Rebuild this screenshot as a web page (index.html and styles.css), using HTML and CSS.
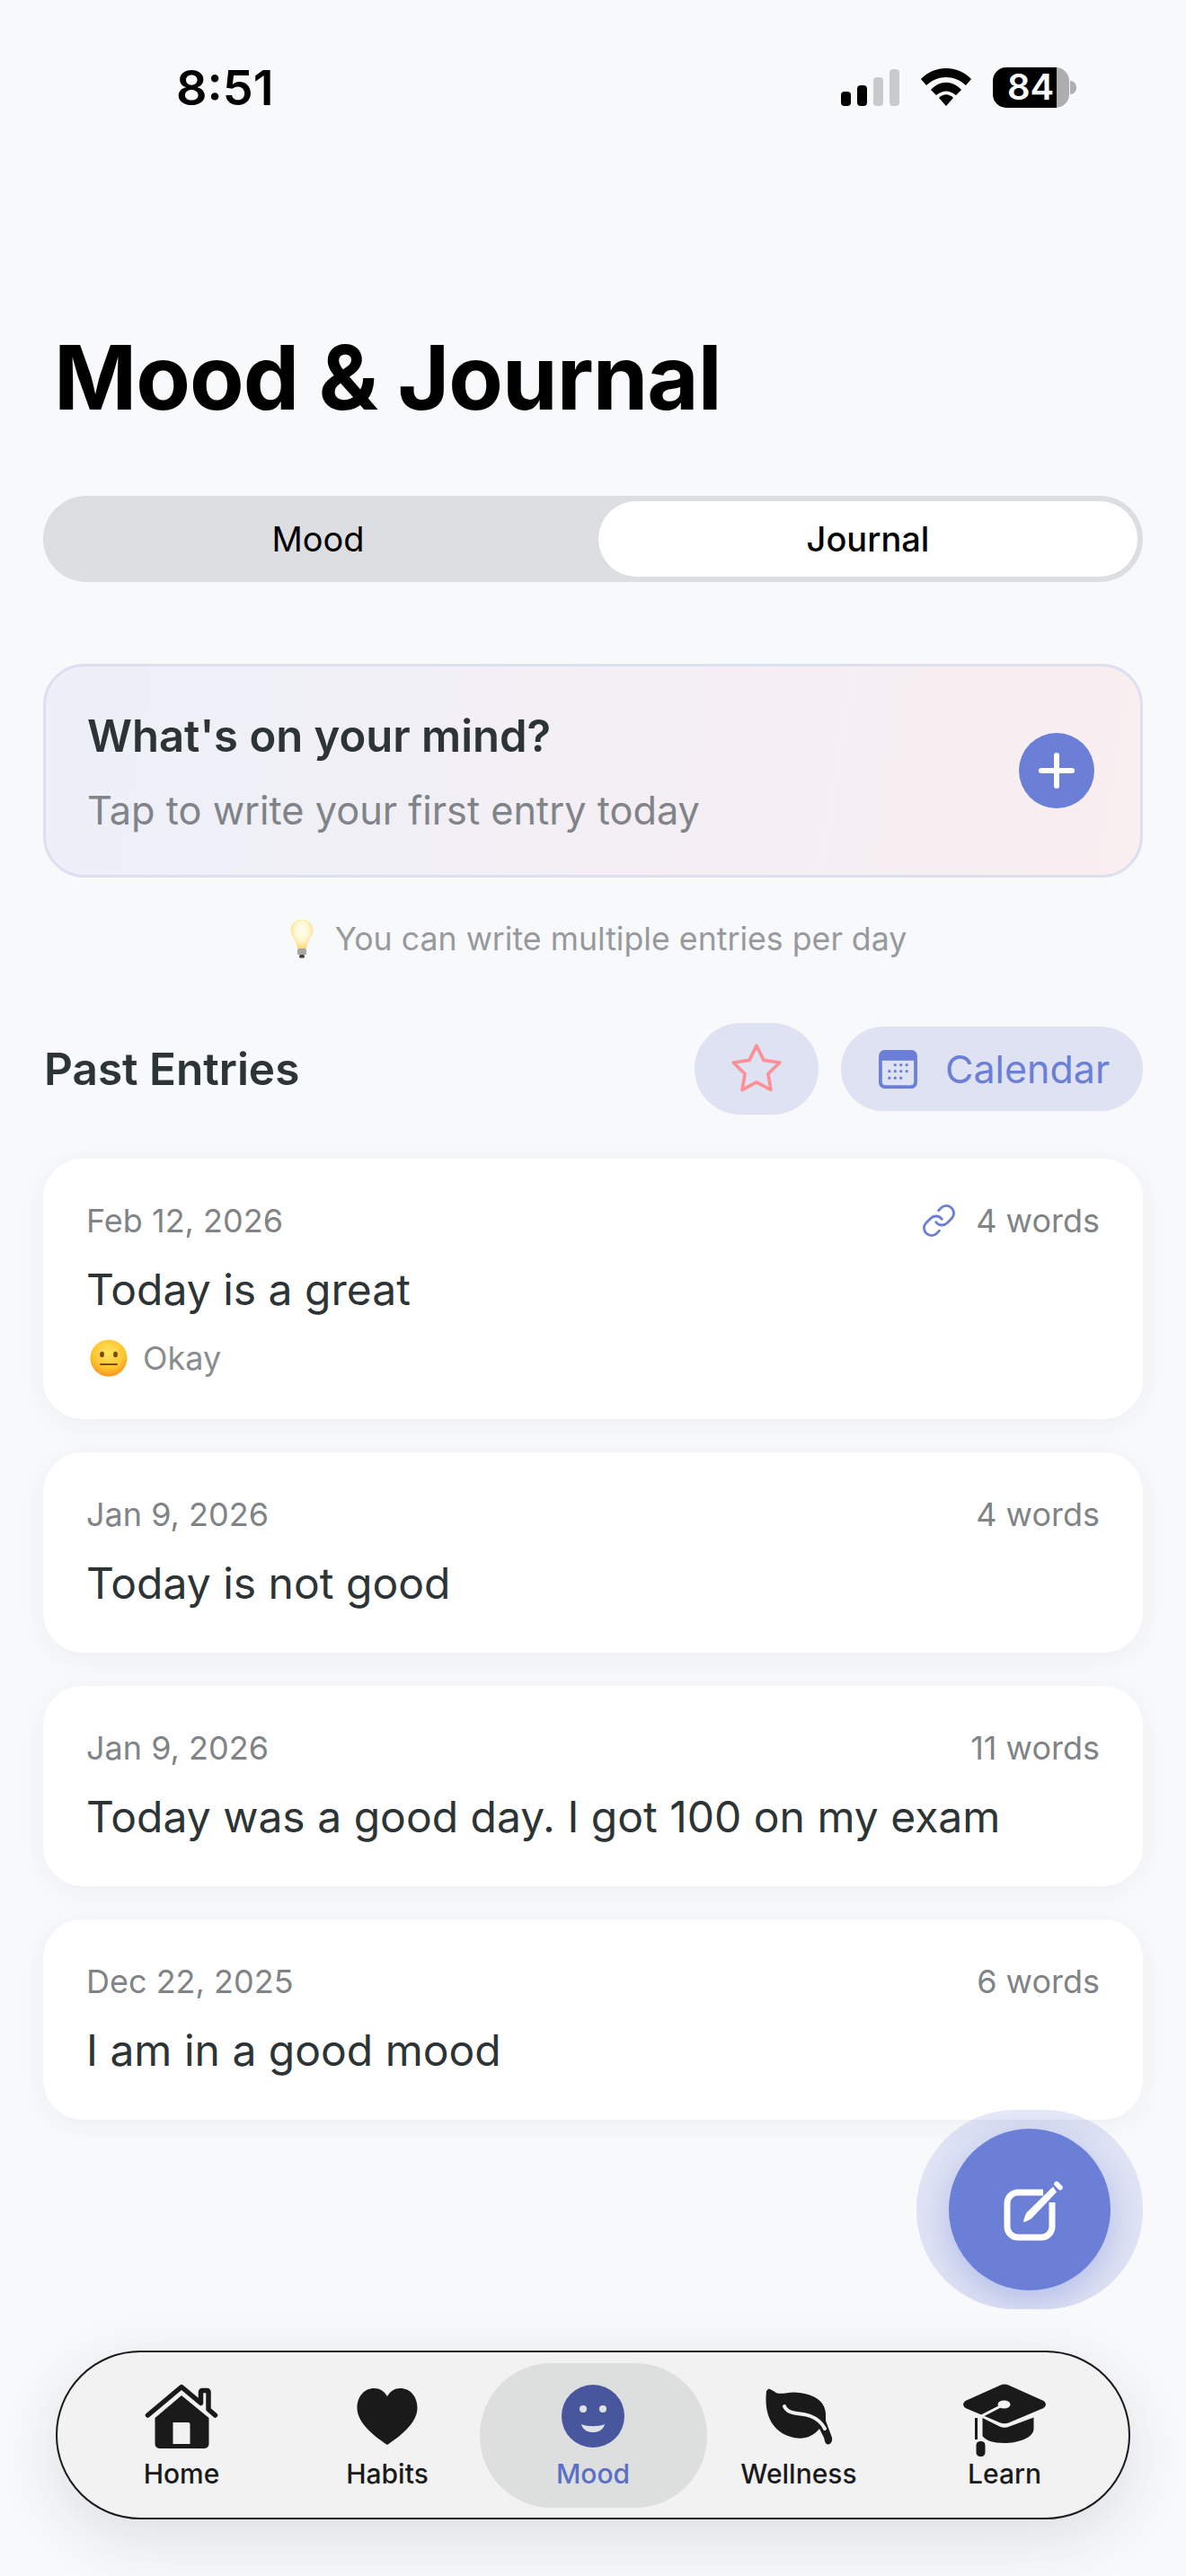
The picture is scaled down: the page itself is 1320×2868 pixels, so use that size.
FILE: index.html
```html
<!DOCTYPE html>
<html lang="en">
<head>
    <meta charset="UTF-8">
    <meta name="viewport" content="width=device-width, initial-scale=1.0">
    <title>Mood &amp; Journal</title>
    <link rel="stylesheet" href="styles.css">
</head>
<body>
    <div class="app">
        <!-- Status Bar -->
        <div class="status-bar">
            <span class="status-time">8:51</span>
            <div class="status-icons">
                <div class="signal">
                    <span class="bar bar-1"></span>
                    <span class="bar bar-2"></span>
                    <span class="bar bar-3"></span>
                    <span class="bar bar-4"></span>
                </div>
                <svg class="wifi" width="58" height="43" viewBox="0 0 58 43">
                    <path d="M1 13 C16 -3 42 -3 57 13 L51 20 C38 8 20 8 7 20 Z" fill="#000"/>
                    <path d="M12 25 C22 14 36 14 46 25 L40 31 C32 25 26 25 18 31 Z" fill="#000"/>
                    <path d="M21 34 C26 29 32 29 37 34 L29 43 Z" fill="#000"/>
                </svg>
                <div class="battery">
                    <div class="battery-body"><span class="battery-level">84</span></div>
                    <span class="battery-nub"></span>
                </div>
            </div>
        </div>

        <main class="content">
            <h1 class="page-title">Mood &amp; Journal</h1>

            <!-- Mood / Journal Switch -->
            <div class="segmented">
                <div class="segment">Mood</div>
                <div class="segment segment-active">Journal</div>
            </div>

            <!-- New Entry Prompt -->
            <div class="prompt-card">
                <div class="prompt-text">
                    <p class="prompt-title">What's on your mind?</p>
                    <p class="prompt-sub">Tap to write your first entry today</p>
                </div>
                <div class="prompt-add">
                    <svg width="40" height="40" viewBox="0 0 40 40">
                        <path d="M20 3 V37 M3 20 H37" stroke="#fff" stroke-width="6" stroke-linecap="round"/>
                    </svg>
                </div>
            </div>

            <div class="hint">
                <svg width="26" height="44" viewBox="0 0 26 44">
                    <defs>
                        <radialGradient id="bulbGlow" cx="50%" cy="40%" r="60%">
                            <stop offset="0%" stop-color="#fffef6"/>
                            <stop offset="55%" stop-color="#fff6cf"/>
                            <stop offset="100%" stop-color="#f9d977"/>
                        </radialGradient>
                    </defs>
                    <path d="M13 0.5 C5.5 0.5 0.5 6 0.5 12.5 C0.5 19 6.5 23 8 33 H18 C19.5 23 25.5 19 25.5 12.5 C25.5 6 20.5 0.5 13 0.5 Z" fill="url(#bulbGlow)"/>
                    <rect x="8" y="33" width="10" height="7" rx="1.5" fill="#a9a69d"/>
                    <rect x="10" y="40" width="6" height="3.5" rx="1.5" fill="#3f3f3f"/>
                </svg>
                <span>You can write multiple entries per day</span>
            </div>

            <!-- Past Entries Header -->
            <div class="entries-head">
                <h2 class="entries-title">Past Entries</h2>
                <div class="entries-actions">
                    <button class="star-btn">
                        <svg width="62" height="62" viewBox="0 0 24 24" fill="none" stroke="#ff8f97" stroke-width="1.4" stroke-linejoin="round">
                            <polygon points="12 2 15.09 8.26 22 9.27 17 14.14 18.18 21.02 12 17.77 5.82 21.02 7 14.14 2 9.27 8.91 8.26"/>
                        </svg>
                    </button>
                    <button class="calendar-btn">
                        <svg width="45" height="45" viewBox="0 0 42 42">
                            <path fill="#6b7fd7" fill-rule="evenodd" d="M7 1 H35 A6 6 0 0 1 41 7 V35 A6 6 0 0 1 35 41 H7 A6 6 0 0 1 1 35 V7 A6 6 0 0 1 7 1 Z M4.5 12 V34 A3.5 3.5 0 0 0 8 37.5 H34 A3.5 3.5 0 0 0 37.5 34 V12 Z"/>
                            <g fill="#6b7fd7">
                                <circle cx="18" cy="16.5" r="1.5"/><circle cx="24" cy="16.5" r="1.5"/><circle cx="30" cy="16.5" r="1.5"/>
                                <circle cx="12" cy="23" r="1.5"/><circle cx="18" cy="23" r="1.5"/><circle cx="24" cy="23" r="1.5"/><circle cx="30" cy="23" r="1.5"/>
                                <circle cx="12" cy="30" r="1.5"/><circle cx="18" cy="30" r="1.5"/><circle cx="24" cy="30" r="1.5"/>
                            </g>
                        </svg>
                        <span>Calendar</span>
                    </button>
                </div>
            </div>

            <!-- Entry List -->
            <div class="entries">
                <article class="entry">
                    <div class="entry-meta">
                        <span>Feb 12, 2026</span>
                        <span class="entry-words">
                            <svg width="40" height="40" viewBox="0 0 24 24" fill="none" stroke="#6b7fd7" stroke-width="1.7" stroke-linecap="round" stroke-linejoin="round">
                                <path d="M10 13a5 5 0 0 0 7.54.54l3-3a5 5 0 0 0-7.07-7.07l-1.72 1.71"/>
                                <path d="M14 11a5 5 0 0 0-7.54-.54l-3 3a5 5 0 0 0 7.07 7.07l1.71-1.71"/>
                            </svg>
                            4 words
                        </span>
                    </div>
                    <p class="entry-text">Today is a great</p>
                    <div class="entry-mood">
                        <svg width="42" height="42" viewBox="0 0 42 42">
                            <defs>
                                <radialGradient id="faceFill" cx="50%" cy="35%" r="65%">
                                    <stop offset="0%" stop-color="#ffe45e"/>
                                    <stop offset="65%" stop-color="#ffc531"/>
                                    <stop offset="100%" stop-color="#f7931a"/>
                                </radialGradient>
                            </defs>
                            <circle cx="21" cy="21" r="20.5" fill="url(#faceFill)"/>
                            <ellipse cx="13.5" cy="17" rx="2.4" ry="3.2" fill="#7a4a12"/>
                            <ellipse cx="28.5" cy="17" rx="2.4" ry="3.2" fill="#7a4a12"/>
                            <rect x="11" y="27" width="20" height="2" rx="1" fill="#7a4a12"/>
                        </svg>
                        <span>Okay</span>
                    </div>
                </article>

                <article class="entry">
                    <div class="entry-meta">
                        <span>Jan 9, 2026</span>
                        <span class="entry-words">4 words</span>
                    </div>
                    <p class="entry-text">Today is not good</p>
                </article>

                <article class="entry">
                    <div class="entry-meta">
                        <span>Jan 9, 2026</span>
                        <span class="entry-words">11 words</span>
                    </div>
                    <p class="entry-text">Today was a good day. I got 100 on my exam</p>
                </article>

                <article class="entry">
                    <div class="entry-meta">
                        <span>Dec 22, 2025</span>
                        <span class="entry-words">6 words</span>
                    </div>
                    <p class="entry-text">I am in a good mood</p>
                </article>
            </div>
        </main>

        <!-- Floating Compose Button -->
        <div class="fab-halo">
            <button class="fab">
                <svg class="fab-icon" width="68" height="70" viewBox="0 0 68 70" fill="none">
                    <path d="M44 13 H16 A12 12 0 0 0 4 25 V51 A12 12 0 0 0 16 63 H42 A12 12 0 0 0 54 51 V24" stroke="#fff" stroke-width="7"/>
                    <path d="M22 46 C23 41 24 38 26 35 L55 6.5 L59 12.5 L31 42 C28 44 25 45.5 22 46 Z" fill="#fff"/>
                    <path d="M59 3.5 L63 7.5" stroke="#fff" stroke-width="5.5" stroke-linecap="round"/>
                </svg>
            </button>
        </div>

        <!-- Bottom Navigation -->
        <nav class="tab-bar">
            <a class="tab">
                <svg class="tab-icon" viewBox="0 0 100 82">
                    <g transform="translate(9.5 0)">
                        <path d="M3 35 L40.5 3.5 L62 21.5 V9 A1.5 1.5 0 0 1 63.5 7.5 H69 A1.5 1.5 0 0 1 70.5 9 V28.5 L78 35" fill="none" stroke="#1a1a1a" stroke-width="5.5" stroke-linecap="round" stroke-linejoin="round"/>
                        <path fill="#1a1a1a" fill-rule="evenodd" d="M40.5 13 L71 38 V67 A5 5 0 0 1 66 72 H16 A5 5 0 0 1 11 67 V38 Z M31 43 V67 H50 V45 A2 2 0 0 0 48 43 Z"/>
                    </g>
                </svg>
                <span class="tab-label">Home</span>
            </a>
            <a class="tab">
                <svg class="tab-icon" viewBox="0 0 100 82">
                    <g transform="translate(16.5 5)">
                        <path fill="#1a1a1a" d="M33.5 9 C30 3 25 0 19 0 C8 0 0 9 0 22 C0 39 20 54 33.5 63 C47 54 67 39 67 22 C67 9 59 0 48 0 C42 0 37 3 33.5 9 Z"/>
                    </g>
                </svg>
                <span class="tab-label">Habits</span>
            </a>
            <a class="tab tab-active">
                <svg class="tab-icon" viewBox="0 0 100 82">
                    <circle cx="50" cy="36" r="35" fill="#48569d"/>
                    <circle cx="39" cy="28" r="4" fill="#dfe1e2"/>
                    <circle cx="61" cy="28" r="4" fill="#dfe1e2"/>
                    <path d="M37 45 C44 48 56 48 63 45 C61 53 54 54 50 54 C46 54 39 53 37 45 Z" fill="#dfe1e2"/>
                </svg>
                <span class="tab-label">Mood</span>
            </a>
            <a class="tab">
                <svg class="tab-icon" viewBox="0 0 100 82">
                    <g transform="translate(13 5)">
                        <path fill="#1a1a1a" d="M3 1 C5 0 8 3 13 5.5 C20 7 28 3 38 5 C54 7 66 14 67 28 L67 36 L74 55 C75 60 71 64 68 62 C66 61 66 58 65 55 L60 45 C52 55 40 58 28 54 C8 48 -2 30 1 3 Z"/>
                        <path fill="none" stroke="#f2f2f3" stroke-width="4" stroke-linecap="round" d="M21 20 C25 30 40 27 50 31 C58 34 63 39 66 45"/>
                    </g>
                </svg>
                <span class="tab-label">Wellness</span>
            </a>
            <a class="tab">
                <svg class="tab-icon" viewBox="0 0 100 82">
                    <g transform="translate(3.5 0)">
                        <path fill="#1a1a1a" d="M42 1.5 Q46.5 -0.5 51 1.5 L90 19 Q95 23 90 27 L51 43.5 Q46.5 45 42 43.5 L3 27 Q-2 23 3 19 Z"/>
                        <path fill="#1a1a1a" d="M22 38 L41 47.5 Q46.5 50 52 47.5 L79 37.5 V50 C79 60 62 66 46 66 C34 66 25 63 22 58 Z"/>
                        <path fill="none" stroke="#f2f2f3" stroke-width="3" d="M46 23 L17 38 V61"/>
                        <ellipse cx="46" cy="23" rx="7" ry="4.5" fill="#f2f2f3"/>
                        <rect x="13.5" y="38" width="3" height="24" fill="#1a1a1a"/>
                        <rect x="15" y="64" width="10" height="17" rx="4.5" fill="#1a1a1a"/>
                    </g>
                </svg>
                <span class="tab-label">Learn</span>
            </a>
        </nav>
    </div>
</body>
</html>
```

FILE: styles.css
```css
/* Basic Reset */
* {
    box-sizing: border-box;
}

body {
    margin: 0;
    padding: 0;
    font-family: 'Inter', 'Liberation Sans', sans-serif;
    background-color: #f8f9fb;
}

p, h1, h2 {
    margin: 0;
}

button {
    border: none;
    font-family: inherit;
    padding: 0;
}

/* App Frame */
.app {
    position: relative;
    width: 1320px;
    height: 2868px;
    overflow: hidden;
}

/* Status Bar */
.status-bar {
    display: flex;
    justify-content: space-between;
    align-items: center;
    height: 194px;
    padding: 0 122px 0 196px;
}

.status-time {
    font-size: 54px;
    font-weight: 600;
    color: #000;
}

.status-icons {
    display: flex;
    align-items: flex-end;
    gap: 23px;
}

.signal {
    display: flex;
    align-items: flex-end;
    gap: 7px;
    margin-bottom: 2px;
}

.wifi {
    margin-bottom: 2px;
}

.bar {
    width: 11px;
    border-radius: 4px;
    background: #000;
}

.bar-1 { height: 16px; }
.bar-2 { height: 23px; }
.bar-3 { height: 32px; background: #c9cacc; }
.bar-4 { height: 41px; background: #c9cacc; }

.battery {
    display: flex;
    align-items: center;
    gap: 1px;
}

.battery-body {
    display: flex;
    align-items: center;
    width: 85px;
    height: 45px;
    border-radius: 15px;
    padding-left: 16px;
    background: linear-gradient(90deg, #000 84%, #aeaeb0 84%);
}

.battery-level {
    font-size: 40px;
    font-weight: 600;
    color: #fff;
    line-height: 1;
}

.battery-nub {
    width: 7px;
    height: 15px;
    border-radius: 0 8px 8px 0;
    background: #aeaeb0;
}

/* Page Content */
.content {
    padding: 0 48px;
}

.page-title {
    margin: 168px 0 74px 12px;
    font-size: 99px;
    font-weight: 700;
    line-height: 116px;
    letter-spacing: -1px;
    color: #000;
}

/* Mood / Journal Switch */
.segmented {
    display: flex;
    gap: 12px;
    height: 96px;
    padding: 6px;
    border-radius: 48px;
    background: #dddee2;
}

.segment {
    flex: 1;
    display: flex;
    justify-content: center;
    align-items: center;
    font-size: 38px;
    font-weight: 400;
    color: #000;
    border-radius: 42px;
}

.segment-active {
    font-weight: 500;
    background: #fff;
}

/* New Entry Prompt */
.prompt-card {
    display: flex;
    justify-content: space-between;
    align-items: center;
    height: 238px;
    margin-top: 91px;
    padding: 0 51px 0 46px;
    border: 3px solid #dcdff0;
    border-radius: 46px;
    background: linear-gradient(100deg, #edf0f9, #f9eef0);
}

.prompt-text {
    margin-top: 4px;
}

.prompt-title {
    font-size: 49px;
    font-weight: 600;
    line-height: 58px;
    color: #2d3436;
}

.prompt-sub {
    margin-top: 26px;
    font-size: 43.3px;
    line-height: 54px;
    color: #808488;
}

.prompt-add {
    display: flex;
    justify-content: center;
    align-items: center;
    width: 84px;
    height: 84px;
    border-radius: 50%;
    background: #6b7fd7;
}

/* Tip Line */
.hint {
    display: flex;
    justify-content: center;
    align-items: center;
    gap: 24px;
    height: 44px;
    margin-top: 46px;
    padding-left: 12px;
    font-size: 35.7px;
    color: #98999c;
}

/* Past Entries Header */
.entries-head {
    display: flex;
    justify-content: space-between;
    align-items: center;
    margin-top: 72px;
}

.entries-title {
    margin-left: 1px;
    font-size: 49.5px;
    font-weight: 600;
    color: #2d3436;
}

.entries-actions {
    display: flex;
    align-items: center;
    gap: 25px;
}

.star-btn {
    display: flex;
    justify-content: center;
    align-items: center;
    width: 138px;
    height: 102px;
    border-radius: 51px;
    background: #dee2f2;
}

.calendar-btn {
    display: flex;
    align-items: center;
    gap: 30px;
    width: 336px;
    height: 94px;
    padding-left: 41px;
    border-radius: 47px;
    font-size: 43px;
    color: #6b7fd7;
    background: #dee2f2;
}

/* Entry List */
.entries {
    display: flex;
    flex-direction: column;
    gap: 37px;
    margin-top: 49px;
}

.entry {
    padding: 44px 48px 46px;
    border-radius: 44px;
    background: #fff;
    box-shadow: 0 6px 30px rgba(40, 50, 80, 0.05);
}

.entry-meta {
    display: flex;
    justify-content: space-between;
    align-items: center;
    height: 50px;
    font-size: 36px;
    color: #808486;
}

.entry-words {
    display: flex;
    align-items: center;
    gap: 21px;
}

.entry-text {
    margin-top: 21px;
    font-size: 48px;
    line-height: 62px;
    color: #2d3436;
}

.entry-mood {
    display: flex;
    align-items: center;
    gap: 17px;
    height: 44px;
    margin-top: 23px;
    margin-left: 4px;
    font-size: 36px;
    color: #8a8d8f;
}

/* Floating Compose Button */
.fab-halo {
    position: absolute;
    left: 1020px;
    top: 2349px;
    display: flex;
    justify-content: center;
    align-items: center;
    width: 252px;
    height: 222px;
    border-radius: 110px;
    overflow: hidden;
    background: rgba(107, 127, 215, 0.17);
}

.fab {
    display: flex;
    justify-content: center;
    align-items: center;
    width: 180px;
    height: 180px;
    border-radius: 50%;
    background: #6b7fd7;
    box-shadow: 0 12px 40px rgba(107, 127, 215, 0.4);
}

.fab-icon {
    margin: 6px 0 0 10px;
}

/* Bottom Navigation */
.tab-bar {
    position: absolute;
    left: 62px;
    bottom: 63px;
    display: flex;
    justify-content: center;
    align-items: center;
    width: 1196px;
    height: 188px;
    border: 2px solid #1a1a1a;
    border-radius: 94px;
    background: #f2f2f3;
    box-shadow: 0 20px 70px rgba(30, 35, 50, 0.12);
}

.tab {
    flex: 0 0 229px;
    display: flex;
    flex-direction: column;
    align-items: center;
    height: 161px;
    padding-top: 23px;
    color: #1a1a1a;
}

.tab-active {
    flex-basis: 253px;
    margin: 0 -12px;
    border-radius: 80px;
    background: #dddfde;
    color: #5b6fc7;
}

.tab-icon {
    width: 100px;
    height: 82px;
    overflow: visible;
}

.tab-label {
    font-size: 30px;
    font-weight: 500;
    line-height: 36px;
}
```
